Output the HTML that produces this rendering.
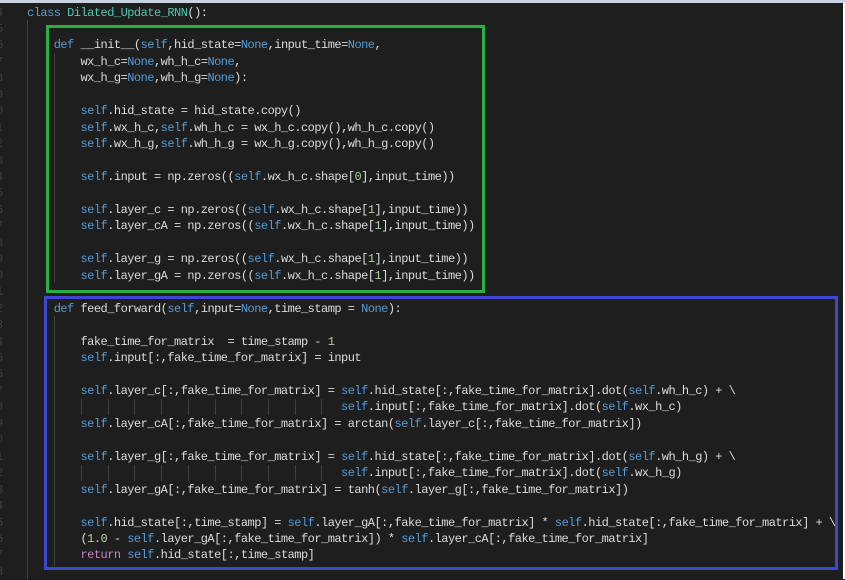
<!DOCTYPE html>
<html><head><meta charset="utf-8"><style>
html,body{margin:0;padding:0}
body{width:845px;height:579px;background:#1e1e1e;position:relative;overflow:hidden;font-family:"Liberation Mono",monospace;font-size:12px;letter-spacing:-0.52px;color:#dcdcdc}
.top{position:absolute;left:0;top:0;width:845px;height:3px;background:#c9d1e2}
.right{position:absolute;left:843px;top:3px;width:2px;height:576px;background:#fff}
.l{position:absolute;left:0;height:16px;line-height:16px;white-space:pre}
.n{position:absolute;left:-4px;color:#3e3e3e;height:16px;line-height:16px}
.g{position:absolute;width:1px;background:#404040}
.k{color:#569cd6}.c{color:#4ec9b0}.f{color:#dcdcaa}.m{color:#b5cea8}.r{color:#c586c0}
.box{position:absolute;box-sizing:border-box;border:3px solid}
</style></head><body>
<div class="top"></div><div class="right"></div>
<div class="g" style="left:27px;top:20px;height:559px"></div>
<div class="g" style="left:54px;top:53px;height:230px"></div>
<div class="g" style="left:54px;top:316px;height:250px"></div>
<div id="code"></div>
<div class="box" style="left:46px;top:25px;width:439px;height:268px;border-color:#27b04a"></div>
<div class="box" style="left:44px;top:296px;width:794px;height:274px;border-color:#3f48cc"></div>
<script>
const L=[
'    <span class="k">class</span> <span class="c">Dilated_Update_RNN</span>():',
'',
'        <span class="k">def</span> __init__(<span class="k">self</span>,hid_state=<span class="k">None</span>,input_time=<span class="k">None</span>,',
'            wx_h_c=<span class="k">None</span>,wh_h_c=<span class="k">None</span>,',
'            wx_h_g=<span class="k">None</span>,wh_h_g=<span class="k">None</span>):',
'',
'            <span class="k">self</span>.hid_state = hid_state.copy()',
'            <span class="k">self</span>.wx_h_c,<span class="k">self</span>.wh_h_c = wx_h_c.copy(),wh_h_c.copy()',
'            <span class="k">self</span>.wx_h_g,<span class="k">self</span>.wh_h_g = wx_h_g.copy(),wh_h_g.copy()',
'',
'            <span class="k">self</span>.input = np.zeros((<span class="k">self</span>.wx_h_c.shape[<span class="m">0</span>],input_time))',
'',
'            <span class="k">self</span>.layer_c = np.zeros((<span class="k">self</span>.wx_h_c.shape[<span class="m">1</span>],input_time))',
'            <span class="k">self</span>.layer_cA = np.zeros((<span class="k">self</span>.wx_h_c.shape[<span class="m">1</span>],input_time))',
'',
'            <span class="k">self</span>.layer_g = np.zeros((<span class="k">self</span>.wx_h_c.shape[<span class="m">1</span>],input_time))',
'            <span class="k">self</span>.layer_gA = np.zeros((<span class="k">self</span>.wx_h_c.shape[<span class="m">1</span>],input_time))',
'',
'        <span class="k">def</span> feed_forward(<span class="k">self</span>,input=<span class="k">None</span>,time_stamp = <span class="k">None</span>):',
'',
'            fake_time_for_matrix  = time_stamp - <span class="m">1</span>',
'            <span class="k">self</span>.input[:,fake_time_for_matrix] = input',
'',
'            <span class="k">self</span>.layer_c[:,fake_time_for_matrix] = <span class="k">self</span>.hid_state[:,fake_time_for_matrix].dot(<span class="k">self</span>.wh_h_c) + \\',
'                                                   <span class="k">self</span>.input[:,fake_time_for_matrix].dot(<span class="k">self</span>.wx_h_c)',
'            <span class="k">self</span>.layer_cA[:,fake_time_for_matrix] = arctan(<span class="k">self</span>.layer_c[:,fake_time_for_matrix])',
'',
'            <span class="k">self</span>.layer_g[:,fake_time_for_matrix] = <span class="k">self</span>.hid_state[:,fake_time_for_matrix].dot(<span class="k">self</span>.wh_h_g) + \\',
'                                                   <span class="k">self</span>.input[:,fake_time_for_matrix].dot(<span class="k">self</span>.wx_h_g)',
'            <span class="k">self</span>.layer_gA[:,fake_time_for_matrix] = tanh(<span class="k">self</span>.layer_g[:,fake_time_for_matrix])',
'',
'            <span class="k">self</span>.hid_state[:,time_stamp] = <span class="k">self</span>.layer_gA[:,fake_time_for_matrix] * <span class="k">self</span>.hid_state[:,fake_time_for_matrix] + \\',
'            (<span class="m">1.0</span> - <span class="k">self</span>.layer_gA[:,fake_time_for_matrix]) * <span class="k">self</span>.layer_cA[:,fake_time_for_matrix]',
'            <span class="r">return</span> <span class="k">self</span>.hid_state[:,time_stamp]',
''];
let h='';
L.forEach((s,i)=>{const t=(4.5+16.45*i).toFixed(1);
h+='<div class="n" style="top:'+t+'px">'+((i+4)%10)+'</div>';
h+='<div class="l" style="top:'+t+'px;left:0.3px">'+s+'</div>';
if(i==24||i==28){for(let k=0;k<10;k++){h+='<div class="g" style="left:'+(81+26.7*k)+'px;top:'+t+'px;height:16px"></div>';}}
});
document.getElementById('code').innerHTML=h;
</script>
</body></html>
